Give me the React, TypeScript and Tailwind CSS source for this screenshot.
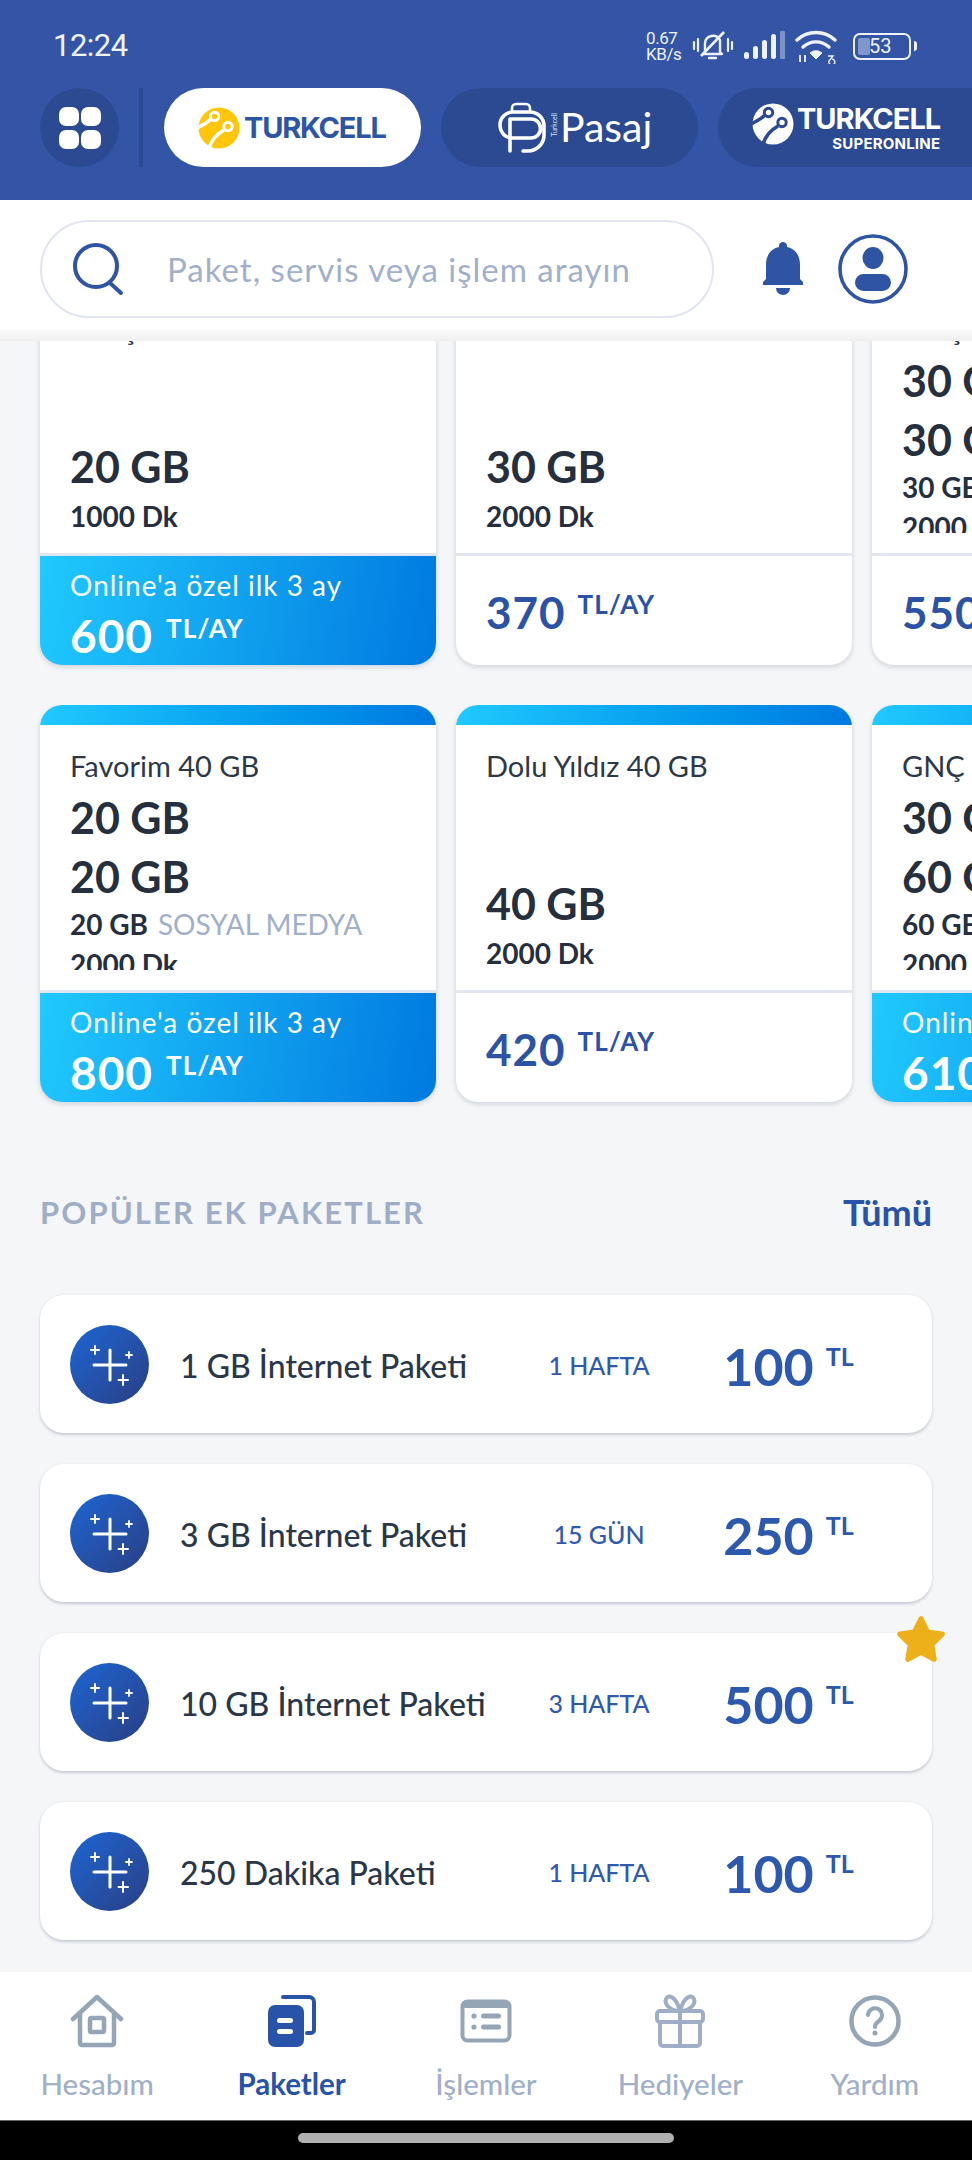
const sans = "font-['Lato','Noto_Sans',sans-serif]";

type Plan = {
  title?: string;
  lines: string[];
  social?: string;
  mins: string;
  price: string;
  promo?: boolean;
};

const row1: Plan[] = [
  { title: "Gençlik Yıldız 20 GB", lines: ["20 GB"], mins: "1000 Dk", price: "600", promo: true },
  { title: "Dolu Yıldız 30 GB", lines: ["30 GB"], mins: "2000 Dk", price: "370" },
  { title: "GNÇ 60 GB", lines: ["30 GB", "30 GB"], social: "30 GB", mins: "2000 Dk", price: "550" },
];

const row2: Plan[] = [
  { title: "Favorim 40 GB", lines: ["20 GB", "20 GB"], social: "20 GB", mins: "2000 Dk", price: "800", promo: true },
  { title: "Dolu Yıldız 40 GB", lines: ["40 GB"], mins: "2000 Dk", price: "420" },
  { title: "GNÇ 90 GB", lines: ["30 GB", "60 GB"], social: "60 GB", mins: "2000 Dk", price: "610", promo: true },
];

const addons = [
  { name: "1 GB İnternet Paketi", time: "1 HAFTA", price: "100" },
  { name: "3 GB İnternet Paketi", time: "15 GÜN", price: "250" },
  { name: "10 GB İnternet Paketi", time: "3 HAFTA", price: "500", star: true },
  { name: "250 Dakika Paketi", time: "1 HAFTA", price: "100" },
];

function TurkcellMark({ color, cut, size }: { color: string; cut: string; size: number }) {
  return (
    <svg width={size} height={size} viewBox="0 0 42 42" className="shrink-0">
      <circle cx="21" cy="21" r="20.5" fill={color} />
      <path d="M-1 21 C5 18 9 16 13 12" fill="none" stroke={cut} strokeWidth="3.6" />
      <path d="M11 42 C13 33 19 27 26 23" fill="none" stroke={cut} strokeWidth="3.6" />
      <circle cx="16.500" cy="9.500" r="4.200" fill={color} stroke={cut} strokeWidth="3" />
      <circle cx="30" cy="19.500" r="4.200" fill={color} stroke={cut} strokeWidth="3" />
    </svg>
  );
}

function StatusIcons() {
  return (
    <div className="flex items-center text-[#eef2fb]">
      <div className="text-[17px] leading-[16px] font-['Roboto',sans-serif] tracking-tight w-[44px] -ml-[4px]">
        <div>0.67</div>
        <div>KB/s</div>
      </div>
      <svg width="42" height="34" viewBox="0 0 42 34" className="ml-[2px]" fill="none" stroke="currentColor">
        <path d="M13 23 V14 a8 8 0 0 1 15 -3 V23 l2 2 H11 Z" strokeWidth="2.4" strokeLinejoin="round" />
        <path d="M17 29 h7" strokeWidth="2.4" strokeLinecap="round" />
        <path d="M9 27 L32 3" strokeWidth="2.6" />
        <path d="M2 13 v7 M6 10 v12 M36 10 v12 M40 13 v7" strokeWidth="2.2" strokeLinecap="round" />
      </svg>
      <svg width="44" height="30" viewBox="0 0 42 30" className="ml-[9px]" fill="currentColor">
        <rect x="0" y="21" width="5" height="7" rx="2.5" />
        <rect x="9" y="15" width="5" height="13" rx="2.5" />
        <rect x="18" y="9" width="5" height="19" rx="2.5" />
        <rect x="27" y="3" width="5" height="25" rx="2.5" />
        <rect x="36" y="0" width="5" height="28" rx="1" opacity="0.4" />
      </svg>
      <svg width="44" height="36" viewBox="0 0 44 36" className="ml-[8px]" fill="none" stroke="currentColor">
        <path d="M2 12 a28 28 0 0 1 38 0" strokeWidth="3.4" strokeLinecap="round" />
        <path d="M8 19 a19 19 0 0 1 26 0" strokeWidth="3.4" strokeLinecap="round" />
        <path d="M15 25 a9 9 0 0 1 12 0 l-6 6 Z" fill="currentColor" strokeWidth="1" />
        <path d="M5 27 v7 M10 34 v-7" strokeWidth="1.8" />
        <path d="M33 28 h5 l-4 5 a3 3 0 1 0 3 -2" strokeWidth="1.400" />
      </svg>
      <div className="relative ml-[14px] flex items-center">
        <div className="w-[58px] h-[27px] rounded-[7px] border-2 border-[#eef2fb] p-[3px] flex items-center">
          <div className="w-[12px] h-full bg-[#7f97cc] rounded-[2px]" />
        </div>
        <div className="absolute left-[16px] top-[2px] text-[20px] leading-[23px] font-['Roboto',sans-serif]">53</div>
        <div className="w-[3px] h-[10px] bg-[#eef2fb] rounded-r-sm ml-[3px]" />
      </div>
    </div>
  );
}

function TopBar() {
  return (
    <div className="h-[200px] shrink-0 bg-[#3455a6]">
      <div className="h-[88px] pl-[53px] pr-[55px] flex items-center justify-between pt-[4px]">
        <span className="text-[31px] text-[#eef2fb] font-['Roboto',sans-serif] tracking-[-0.5px]">12:24</span>
        <StatusIcons />
      </div>
      <div className="flex items-center pl-[40px] overflow-hidden">
        <div className="w-[79px] h-[79px] shrink-0 rounded-full bg-[#2c4a91] grid grid-cols-[20px_20px] gap-x-[2px] gap-y-[4px] place-content-center">
          <span className="w-[20px] h-[19px] rounded-[7px] bg-white" />
          <span className="w-[20px] h-[19px] rounded-[7px] bg-white" />
          <span className="w-[20px] h-[19px] rounded-[7px] bg-white" />
          <span className="w-[20px] h-[19px] rounded-[7px] bg-white" />
        </div>
        <div className="w-[4px] h-[79px] shrink-0 bg-[#2c4a91] ml-[20px] mr-[21px]" />
        <div className="w-[257px] h-[79px] shrink-0 rounded-full bg-white flex items-center pl-[34px]">
          <TurkcellMark color="#ffc60b" cut="#ffffff" size={42} />
          <span className="ml-[4px] text-[#2c55a6] text-[29px] font-bold font-['Inter',sans-serif] tracking-[-1.2px]">TURKCELL</span>
        </div>
        <div className="w-[257px] h-[79px] shrink-0 ml-[20px] rounded-full bg-[#2c4a91] flex items-center pl-[56px] text-white">
          <svg width="50" height="52" viewBox="0 0 50 52" fill="none" stroke="currentColor" strokeWidth="3.6" strokeLinejoin="round" strokeLinecap="round">
            <path d="M15 10 V6 a4 4 0 0 1 4 -4 h10 a4 4 0 0 1 4 4 V10" strokeWidth="2.6" />
            <path d="M13 49 V17 h21 a9.5 9.5 0 0 1 0 19 H13" />
            <path d="M13 36 a13 13 0 0 1 -10 -13 a13 13 0 0 1 13 -13 h17 a14 14 0 0 1 14 14 V33 a16 16 0 0 1 -16 16 h-5" />
          </svg>
          <span className="text-[7px] leading-none text-[#dfe6f5] -rotate-90 w-[10px] ml-[2px] mt-[8px]">Turkcell</span>
          <span className="ml-[1px] text-[41px] font-['Lato',sans-serif] leading-none pb-[2px]">Pasaj</span>
        </div>
        <div className="w-[260px] h-[79px] shrink-0 ml-[20px] rounded-l-full bg-[#2c4a91] flex items-center pl-[34px] text-white">
          <div className="pb-[8px]">
            <TurkcellMark color="#ffffff" cut="#2c4a91" size={42} />
          </div>
          <div className="ml-[3px] flex flex-col items-end">
            <span className="text-[29px] leading-[32px] font-bold font-['Inter',sans-serif] tracking-[-1px]">TURKCELL</span>
            <span className="text-[15px] leading-[18px] font-bold font-['Inter',sans-serif] tracking-[0.2px]">SUPERONLINE</span>
          </div>
        </div>
      </div>
    </div>
  );
}

function SearchBar() {
  return (
    <div className={`h-[141px] shrink-0 bg-white relative z-10 flex flex-col ${sans}`}>
      <div className="h-[130px] pt-[8px] pl-[40px] flex items-center">
        <div className="w-[674px] h-[98px] rounded-full border-[2.5px] border-[#e0e5f0] flex items-center pl-[30px]">
          <svg width="54" height="54" viewBox="0 0 54 54" fill="none" stroke="#2f54a4" strokeWidth="4">
            <circle cx="24" cy="24" r="21" />
            <path d="M38 41 L49 51" strokeLinecap="round" />
          </svg>
          <span className="ml-[41px] mt-[2px] text-[33px] text-[#a1afc9] tracking-[1px]">Paket, servis veya işlem arayın</span>
        </div>
        <svg width="46" height="54" viewBox="0 0 46 54" className="ml-[46px]" fill="#2f54a4">
          <path d="M23 0 a4 4 0 0 1 4 5 c9 2 13 9 13 18 v14 l3 3 v3 H3 v-3 l3 -3 V23 c0 -9 4 -16 13 -18 a4 4 0 0 1 4 -5 Z" />
          <path d="M16 46 h14 a7 7 0 0 1 -14 0 Z" />
        </svg>
        <svg width="70" height="70" viewBox="0 0 70 70" className="ml-[32px]" fill="#2f54a4">
          <circle cx="35" cy="35" r="33" fill="none" stroke="#2f54a4" strokeWidth="3.6" />
          <ellipse cx="35" cy="24" rx="10.5" ry="11" />
          <rect x="17" y="40" width="36" height="17" rx="8.5" />
        </svg>
      </div>
      <div className="h-[11px] bg-gradient-to-b from-[#f9f9f9] to-[#f0f0f0]" />
    </div>
  );
}

function PlanCard({ plan }: { plan: Plan }) {
  const bare = plan.lines.length === 1;
  return (
    <div className="w-[396px] shrink-0 rounded-[22px] overflow-hidden bg-white shadow-[0_2px_5px_rgba(40,50,80,0.18)]">
      <div className="h-[20px] bg-gradient-to-r from-[#20c9fe] to-[#0079e0]" />
      <div className="h-[265px] px-[30px] overflow-hidden">
        <div className={`overflow-hidden flex flex-col ${bare ? "h-[247px]" : "h-[245px]"}`}>
          <div className="pt-[25px] text-[29px] leading-[32px] text-[#2c3848]">{plan.title}</div>
          <div className={`flex flex-col text-[#252f3e] ${bare ? "mt-auto" : "pt-[6px]"}`}>
            {plan.lines.map((l, i) => (
              <div key={i} className="text-[43px] leading-[59px] font-bold">{l}</div>
            ))}
            {plan.social && (
              <div className="text-[28px] leading-[36px] font-bold">
                {plan.social} <span className="ml-[3px] font-normal text-[#a1afc9]">SOSYAL MEDYA</span>
              </div>
            )}
            <div className={`text-[28px] leading-[38px] font-bold ${bare ? "mt-[1px]" : "mt-[3px]"}`}>{plan.mins}</div>
          </div>
        </div>
      </div>
      <div className="h-[3px] bg-[#e2e6f0]" />
      {plan.promo ? (
        <div className="h-[109px] px-[30px] pt-[13px] text-white bg-[linear-gradient(100deg,#20c9fe,#0079e0)]">
          <div className="text-[28px] leading-[32px] tracking-[1px]">Online'a özel ilk 3 ay</div>
          <div className="flex items-start mt-[10px]">
            <span className="text-[46px] leading-[50px] font-bold tracking-[1px]">{plan.price}</span>
            <span className="ml-[13px] text-[26px] leading-[34px] font-bold tracking-[1px]">TL/AY</span>
          </div>
        </div>
      ) : (
        <div className="h-[109px] px-[30px] pt-[31px] text-[#2c52a5]">
          <div className="flex items-start">
            <span className="text-[44px] leading-[50px] font-bold tracking-[1px]">{plan.price}</span>
            <span className="ml-[12px] text-[26px] leading-[34px] font-bold tracking-[1px]">TL/AY</span>
          </div>
        </div>
      )}
    </div>
  );
}

function Sparkle() {
  return (
    <div className="w-[79px] h-[79px] shrink-0 rounded-full bg-gradient-to-br from-[#1a66d4] to-[#273f85] flex items-center justify-center">
      <svg width="79" height="79" viewBox="0 0 79 79" stroke="#fff" strokeLinecap="round">
        <path d="M40 25 V55 M24 40 H56" strokeWidth="3" />
        <path d="M25 21 V29 M21 25 H29" strokeWidth="2" />
        <path d="M59 27 V33 M56 30 H62" strokeWidth="1.8" />
        <path d="M53 50 V60 M48.500 55 H58" strokeWidth="2" />
      </svg>
    </div>
  );
}

function AddonRow({ item }: { item: (typeof addons)[number] }) {
  return (
    <div className="relative h-[138px] rounded-[24px] bg-white shadow-[0_1.500px_3px_rgba(40,50,80,0.22)] flex items-center pl-[30px]">
      <Sparkle />
      <div className="ml-[31px] pt-[3px] w-[320px] text-[32px] leading-[40px] text-[#2a3748] font-medium">{item.name}</div>
      <div className="w-[200px] pt-[3px] -ml-[1px] text-center text-[25px] text-[#2f5aad] font-medium">{item.time}</div>
      <div className="w-[179px] flex justify-center pt-[3px] text-[#2c58ae] font-bold">
        <span className="text-[52px] leading-[60px]">{item.price}</span>
        <span className="ml-[12px] text-[25px] leading-[40px]">TL</span>
      </div>
      {item.star && (
        <svg width="56" height="54" viewBox="0 0 24 24" className="absolute -right-[17px] -top-[20px]" fill="#eeb01a" stroke="#eeb01a" strokeWidth="2.4" strokeLinejoin="round">
          <path d="M12 2.600 L14.900 8.500 L21.400 9.400 L16.700 14 L17.800 20.500 L12 17.400 L6.200 20.500 L7.300 14 L2.600 9.400 L9.100 8.500 Z" />
        </svg>
      )}
    </div>
  );
}

const navItems = [
  { label: "Hesabım", icon: "home" },
  { label: "Paketler", icon: "pack", active: true },
  { label: "İşlemler", icon: "list" },
  { label: "Hediyeler", icon: "gift" },
  { label: "Yardım", icon: "help" },
];

function NavIcon({ name }: { name: string }) {
  if (name === "home") {
    return (
      <svg width="54" height="54" viewBox="0 0 54 54" fill="none" stroke="#94a5b5" strokeWidth="4.500" strokeLinecap="round" strokeLinejoin="round">
        <path d="M3 25 L27 3 L51 25" />
        <path d="M10 20 V49 a2 2 0 0 0 2 2 H42 a2 2 0 0 0 2 -2 V20" />
        <rect x="20" y="24" width="14" height="14" rx="1.500" />
      </svg>
    );
  }
  if (name === "pack") {
    return (
      <svg width="50" height="54" viewBox="0 0 50 54">
        <path d="M16 3 H42 a5 5 0 0 1 5 5 V36 a3 3 0 0 1 -3 3 H40" fill="none" stroke="#2853a8" strokeWidth="4" strokeLinecap="round" />
        <rect x="1" y="11" width="36" height="42" rx="7" fill="#2853a8" />
        <rect x="10" y="24" width="16" height="5" rx="2.500" fill="#fff" />
        <rect x="10" y="35" width="16" height="5" rx="2.500" fill="#fff" />
      </svg>
    );
  }
  if (name === "list") {
    return (
      <svg width="52" height="44" viewBox="0 0 52 44">
        <rect x="2.500" y="2.500" width="47" height="39" rx="5" fill="none" stroke="#94a5b5" strokeWidth="4" />
        <rect x="2" y="2" width="48" height="7" rx="3" fill="#94a5b5" />
        <circle cx="14" cy="17" r="2.600" fill="#94a5b5" />
        <circle cx="14" cy="28" r="2.600" fill="#94a5b5" />
        <rect x="21" y="14.500" width="20" height="5" rx="2.500" fill="#94a5b5" />
        <rect x="21" y="25.500" width="20" height="5" rx="2.500" fill="#94a5b5" />
      </svg>
    );
  }
  if (name === "gift") {
    return (
      <svg width="52" height="54" viewBox="0 0 52 54" fill="none" stroke="#9fadc6" strokeWidth="4" strokeLinejoin="round">
        <rect x="3" y="17" width="46" height="11" rx="3" />
        <path d="M6 28 V49 a3 3 0 0 0 3 3 H43 a3 3 0 0 0 3 -3 V28" />
        <path d="M26 17 V52" />
        <path d="M26 17 C16 17 10 10 12 5 C14 0 22 2 26 17 C30 2 38 0 40 5 C42 10 36 17 26 17 Z" />
      </svg>
    );
  }
  return (
    <svg width="52" height="52" viewBox="0 0 52 52" fill="none" stroke="#94a5b5" strokeWidth="4.500">
      <circle cx="26" cy="26" r="23.500" />
      <path d="M19 20 a7 7 0 1 1 11 6 c-3 2 -4 3 -4 6" strokeWidth="4" strokeLinecap="round" />
      <circle cx="26" cy="38" r="2.500" fill="#94a5b5" stroke="none" />
    </svg>
  );
}

function BottomNav() {
  return (
    <div className={`h-[148px] shrink-0 bg-white flex ${sans}`}>
      {navItems.map((item) => (
        <div key={item.label} className="flex-1 flex flex-col items-center">
          <div className="h-[54px] mt-[22px] flex items-center justify-center">
            <NavIcon name={item.icon} />
          </div>
          <span className={`mt-[20px] text-[29.500px] leading-[32px] ${item.active ? "font-bold text-[#2853a8]" : "font-medium text-[#a1afc9]"}`}>
            {item.label}
          </span>
        </div>
      ))}
    </div>
  );
}

export default function App() {
  return (
    <div className={`w-[972px] h-[2160px] flex flex-col overflow-hidden bg-[#f4f6f8] ${sans}`}>
      <TopBar />
      <SearchBar />
      <div className="flex-1 min-h-0 overflow-hidden">
        <div className="-mt-[73px]">
          <div className="flex gap-[20px] pl-[40px] overflow-hidden pb-[8px]">
            {row1.map((p) => (
              <PlanCard key={p.price} plan={p} />
            ))}
          </div>
          <div className="flex gap-[20px] pl-[40px] overflow-hidden mt-[32px] pb-[8px]">
            {row2.map((p) => (
              <PlanCard key={p.price} plan={p} />
            ))}
          </div>
          <div className="flex items-center justify-between px-[40px] mt-[82px]">
            <span className="text-[31px] leading-[40px] font-bold text-[#9fadc6] tracking-[2.1px]">POPÜLER EK PAKETLER</span>
            <span className="text-[36px] leading-[40px] font-bold text-[#2853a8]">Tümü</span>
          </div>
          <div className="flex flex-col gap-[31px] px-[40px] mt-[63px]">
            {addons.map((a) => (
              <AddonRow key={a.name} item={a} />
            ))}
          </div>
        </div>
      </div>
      <BottomNav />
      <div className="h-[40px] shrink-0 bg-black border-t border-[#666] flex justify-center pt-[12px]">
        <div className="w-[376px] h-[10px] rounded-full bg-[#b0b0b0]" />
      </div>
    </div>
  );
}
